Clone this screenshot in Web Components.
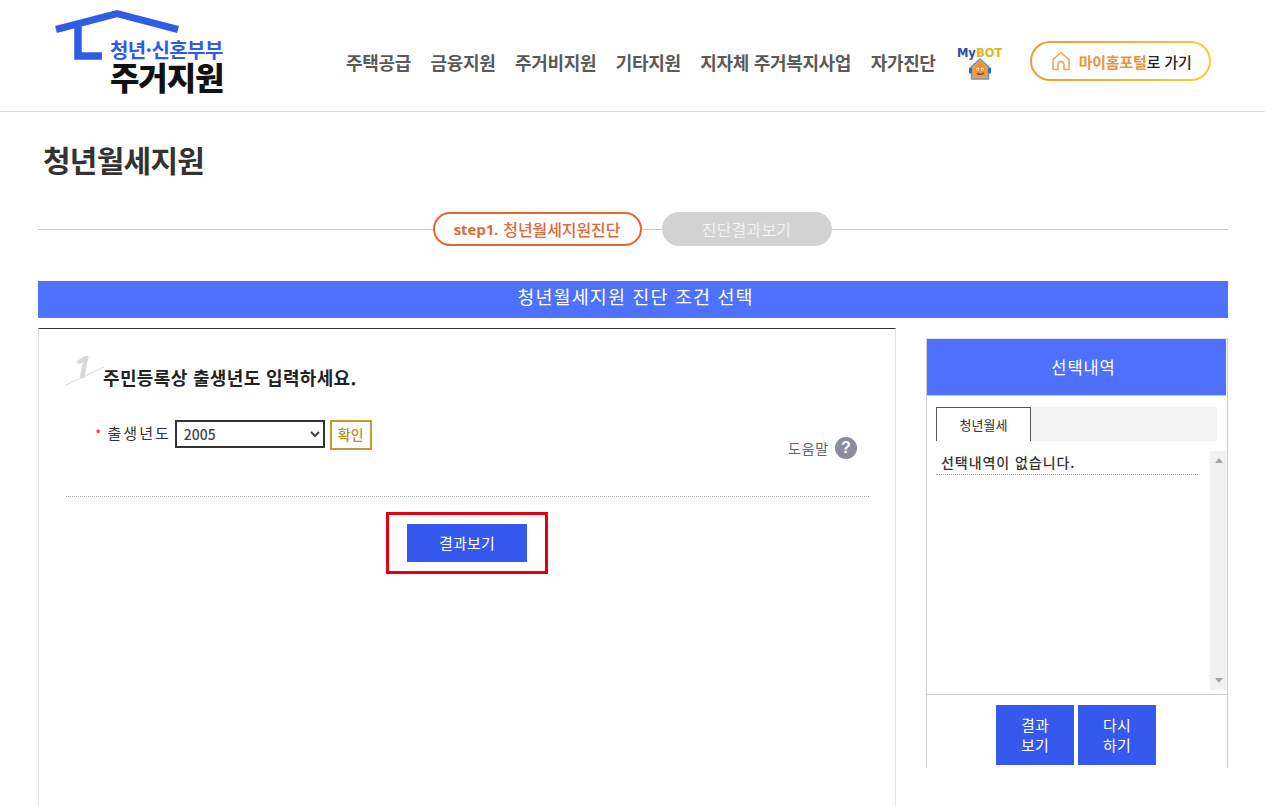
<!DOCTYPE html>
<html lang="ko">
<head>
<meta charset="utf-8">
<title>청년월세지원</title>
<style>
    html, body { margin: 0; padding: 0; height: 806px; overflow: hidden; background: #fff; }
    body { font-family: "Noto Sans CJK KR", "Noto Sans", sans-serif; color: #333; }
</style>
</head>
<body>
<site-header></site-header>
<page-title>청년월세지원</page-title>
<step-bar></step-bar>
<section-bar>청년월세지원 진단 조건 선택</section-bar>
<main-area>
    <question-panel></question-panel>
    <selection-panel></selection-panel>
</main-area>

<script>
// shadow root 만드는 공통 부분
class BaseElement extends HTMLElement {
    constructor() {
        super();
        const shadow = this.attachShadow({mode: 'open'});
        const template = document.createElement('template');
        template.innerHTML = this.markup();
        shadow.appendChild(template.content.cloneNode(true));
    }
}

// 상단 메뉴
class SiteHeader extends BaseElement {
    markup() {
        return `
            <style>
                :host { display: flex; height: 111px; border-bottom: 1px solid #dedede; box-sizing: content-box; }
                .logo { position: relative; box-sizing: border-box; width: 190px; margin-left: 55px; height: 111px; flex: none; padding: 38px 0 0 55px; }
                .logo svg { position: absolute; left: 0; top: 0; display: block; }
                .logo span { display: block; white-space: nowrap; }
                .logo .sub { font-size: 20px; line-height: 23px; font-weight: 700; color: #2f5be7; letter-spacing: -.6px; }
                .logo .main { margin-top: -3px; font-size: 32px; line-height: 36px; font-weight: 900; color: #111; letter-spacing: -1.1px; }
                nav { display: flex; gap: 19.600px; margin-left: 101px; padding-top: 48px; font-size: 18px; line-height: 28px; font-weight: 700; color: #5a5a5a; letter-spacing: -.33px; white-space: nowrap; }
                .bot { margin-left: 20px; margin-top: 48px; width: 48px; flex: none; text-align: center; }
                .bot .name { display: block; font: 700 11.500px/10px "DejaVu Sans", sans-serif; color: #2b4aa8; }
                .bot .name b { color: #e7b416; }
                .bot svg { display: block; margin: 0 auto; }
                .portal { margin-left: 26px; margin-top: 41px; width: 181px; height: 40px; box-sizing: border-box; border-radius: 20px; border: 2px solid transparent; background: linear-gradient(#fff, #fff) padding-box, linear-gradient(90deg, #ec9a34, #f6cb36) border-box; display: flex; align-items: center; justify-content: center; gap: 8px; font-size: 15px; font-weight: 500; color: #222; letter-spacing: -.2px; flex: none; padding-left: 2px; }
                .portal b { color: #f0913a; font-weight: 700; }
            </style>
            <div class="logo">
                <svg width="190" height="111" viewBox="0 0 190 111">
                    <path d="M1 29.500 62 13.500 123 29.500" fill="none" stroke="#2f5be7" stroke-width="7"/>
                    <path d="M23 21V56H47" fill="none" stroke="#2f5be7" stroke-width="7.500"/>
                </svg>
                <span class="sub">청년·신혼부부</span>
                <span class="main">주거지원</span>
            </div>
            <nav>
                <span>주택공급</span><span>금융지원</span><span>주거비지원</span><span>기타지원</span><span>지자체 주거복지사업</span><span>자가진단</span>
            </nav>
            <div class="bot">
                <span class="name">My<b>BOT</b></span>
                <svg width="24" height="22" viewBox="0 0 24 22">
                    <path d="M12 1 3.500 8.500V21h17V8.500z" fill="#f2a03d" stroke="#6d93c9" stroke-width="1.500" stroke-linejoin="round"/>
                    <path d="M7 8.500 12 4l5 4.500V18H7z" fill="#f08f2e"/>
                    <circle cx="9.800" cy="11" r="1.500" fill="#fff"/>
                    <circle cx="14.200" cy="11" r="1.500" fill="#fff"/>
                    <circle cx="9.800" cy="11.200" r=".6" fill="#2b3a67"/>
                    <circle cx="14.200" cy="11.200" r=".6" fill="#2b3a67"/>
                    <path d="M9 15.500c2 1 5 1 7-.5" fill="none" stroke="#2b4aa8" stroke-width="1.200"/>
                    <rect x="1" y="9.500" width="3" height="6" rx="1" fill="#2b6fb8"/>
                    <rect x="20" y="9.500" width="3" height="6" rx="1" fill="#2b6fb8"/>
                </svg>
            </div>
            <div class="portal">
                <svg width="20" height="20" viewBox="0 0 20 20" fill="none" stroke="#f0a050" stroke-width="1.500" stroke-linejoin="round">
                    <path d="M2 18.500V8.500L10 1.500l8 7v10h-5v-5a3 3 0 0 0-6 0v5z"/>
                </svg>
                <span><b>마이홈포털</b>로 가기</span>
            </div>
        `;
    }
}

class PageTitle extends BaseElement {
    markup() {
        return `
            <style>
                :host { display: block; padding: 25px 0 0 43px; height: 75px; font-size: 30px; line-height: 44px; font-weight: 700; color: #333; letter-spacing: -.75px; }
            </style>
            <slot></slot>
        `;
    }
}

// 단계 표시. 선은 뒤에 깔린 배경
class StepBar extends BaseElement {
    markup() {
        return `
            <style>
                :host { display: flex; justify-content: center; gap: 20px; margin: 0 37px 0 38px; padding-right: 2px; height: 34px; background: linear-gradient(#c9c9c9, #c9c9c9) 0 17px / 100% 1px no-repeat; font-size: 16px; font-weight: 500; }
                .step { box-sizing: border-box; height: 34px; border-radius: 17px; display: flex; align-items: center; justify-content: center; white-space: nowrap; }
                .on { width: 209px; background: #fff; border: 2px solid #e4692f; color: #df6a35; letter-spacing: -.1px; }
                .on em { font: 700 15px "Open Sans", sans-serif; margin-right: 5px; }
                .off { width: 170px; background: #d2d2d2; color: #f1f1f1; font-weight: 400; letter-spacing: .2px; }
            </style>
            <div class="step on"><em>step1.</em>청년월세지원진단</div>
            <div class="step off">진단결과보기</div>
        `;
    }
}

class SectionBar extends BaseElement {
    markup() {
        return `
            <style>
                :host { display: block; box-sizing: border-box; margin: 35px 37px 0 38px; padding-left: 5px; height: 37px; background: #4e71ff; color: #fff; font-size: 18.500px; line-height: 30px; text-align: center; letter-spacing: 1.100px; }
            </style>
            <slot></slot>
        `;
    }
}

class MainArea extends BaseElement {
    markup() {
        return `
            <style>
                :host { display: flex; align-items: flex-start; gap: 30px; margin: 10px 37px 0 38px; }
            </style>
            <slot></slot>
        `;
    }
}

// 왼쪽 입력 영역
class QuestionPanel extends BaseElement {
    markup() {
        return `
            <style>
                :host { display: block; box-sizing: border-box; width: 858px; height: 520px; flex: none; border: 1px solid #e2e2e2; border-top: 1px solid #333; padding: 0 26px 0 27px; }
                .head { position: relative; padding: 35px 0 0 37px; height: 48px; font-size: 18px; line-height: 26px; font-weight: 700; color: #222; letter-spacing: .35px; }
                .num { position: absolute; left: 8px; top: 18px; font: italic 700 30px/40px "Open Sans", sans-serif; color: #d8d8d8; }
                .head svg { position: absolute; left: 0; top: 37px; }
                .row { display: flex; align-items: flex-start; padding: 8px 0 0 29px; height: 76px; border-bottom: 1px dotted #aaa; }
                .req { color: #e2342c; font-size: 14px; margin-right: 6px; line-height: 28px; }
                label { font-size: 15px; line-height: 26px; color: #333; margin-right: 4px; letter-spacing: 2px; }
                select { box-sizing: border-box; width: 150px; height: 28px; border: 2px solid #333; border-radius: 0; background: #fff; color: #444; font: 500 14px "Noto Sans CJK KR", sans-serif; padding-left: 3px; margin: 0; }
                .ok { box-sizing: border-box; width: 42px; height: 30px; margin-left: 5px; border: 2px solid #c8992e; color: #b8902a; font-size: 14px; line-height: 25px; text-align: center; font-weight: 500; }
                .help { margin-left: auto; margin-right: 12px; margin-top: 17px; display: flex; align-items: center; gap: 6px; font-size: 14px; color: #666; letter-spacing: .8px; }
                .help i { display: block; width: 22px; height: 22px; border-radius: 50%; background: #8c8c9c; color: #fff; font: 700 16px/22px "Liberation Sans", sans-serif; text-align: center; letter-spacing: 0; }
                .action { display: flex; justify-content: center; padding-top: 15px; padding-right: 1px; }
                .mark { border: 3px solid #e60012; padding: 9px 18px; }
                .go { width: 120px; height: 38px; background: #3558ef; color: #fff; font-size: 15px; line-height: 38px; text-align: center; letter-spacing: .2px; }
            </style>
            <div class="head">
                <span class="num">1</span>
                <svg width="40" height="20" viewBox="0 0 40 20"><path d="M0 19 38 1" stroke="#d8d8d8" stroke-width="1"/></svg>
                주민등록상 출생년도 입력하세요.
            </div>
            <div class="row">
                <span class="req">*</span>
                <label>출생년도</label>
                <select><option>2005</option></select>
                <div class="ok">확인</div>
                <div class="help">도움말 <i>?</i></div>
            </div>
            <div class="action"><div class="mark"><div class="go">결과보기</div></div></div>
        `;
    }
}

// 오른쪽 선택내역
class SelectionPanel extends BaseElement {
    markup() {
        return `
            <style>
                :host { display: block; box-sizing: border-box; width: 302px; height: 430px; margin-top: 10px; flex: none; border: 1px solid #cfcfcf; border-bottom: 0; border-top-color: #e6e6e6; }
                .title { height: 56px; margin-right: 1px; padding-left: 14px; background: #4e71ff; color: #fff; font-size: 16.500px; line-height: 57px; text-align: center; letter-spacing: .9px; border-bottom: 1px solid #cfcfcf; }
                .tabs { margin: 11px 10px 0 9px; height: 34px; background: #f5f5f5; display: flex; }
                .tab { box-sizing: border-box; width: 95px; height: 34px; background: #fff; border: 1px solid #555; border-bottom: 0; font-size: 13px; line-height: 33px; text-align: center; color: #333; }
                .body { display: flex; height: 244px; margin-top: 10px; border-bottom: 1px solid #cfcfcf; box-sizing: border-box; padding-bottom: 4px; }
                .list { flex: 1; padding: 0 12px 0 9px; }
                .empty { height: 24px; padding-left: 5px; font-size: 14px; line-height: 23px; color: #333; font-weight: 500; letter-spacing: .95px; border-bottom: 1px dotted #aaa; box-sizing: border-box; }
                .track { width: 17px; background: #f1f1f1; display: flex; flex-direction: column; justify-content: space-between; align-items: center; padding: 7px 0; box-sizing: border-box; }
                .btns { display: flex; justify-content: center; gap: 4px; padding: 10px 2px 0 0; }
                .btn { width: 78px; height: 60px; background: #3558ef; color: #fff; font-size: 15px; line-height: 20px; display: flex; align-items: center; justify-content: center; text-align: center; letter-spacing: .3px; }
            </style>
            <div class="title">선택내역</div>
            <div class="tabs"><div class="tab">청년월세</div></div>
            <div class="body">
                <div class="list"><div class="empty">선택내역이 없습니다.</div></div>
                <div class="track">
                    <svg width="8" height="5" viewBox="0 0 8 5"><path d="M4 0 8 5H0z" fill="#a3a3a3"/></svg>
                    <svg width="8" height="5" viewBox="0 0 8 5"><path d="M4 5 8 0H0z" fill="#a3a3a3"/></svg>
                </div>
            </div>
            <div class="btns">
                <div class="btn">결과<br>보기</div>
                <div class="btn">다시<br>하기</div>
            </div>
        `;
    }
}

customElements.define('site-header', SiteHeader);
customElements.define('page-title', PageTitle);
customElements.define('step-bar', StepBar);
customElements.define('section-bar', SectionBar);
customElements.define('main-area', MainArea);
customElements.define('question-panel', QuestionPanel);
customElements.define('selection-panel', SelectionPanel);
</script>
</body>
</html>
